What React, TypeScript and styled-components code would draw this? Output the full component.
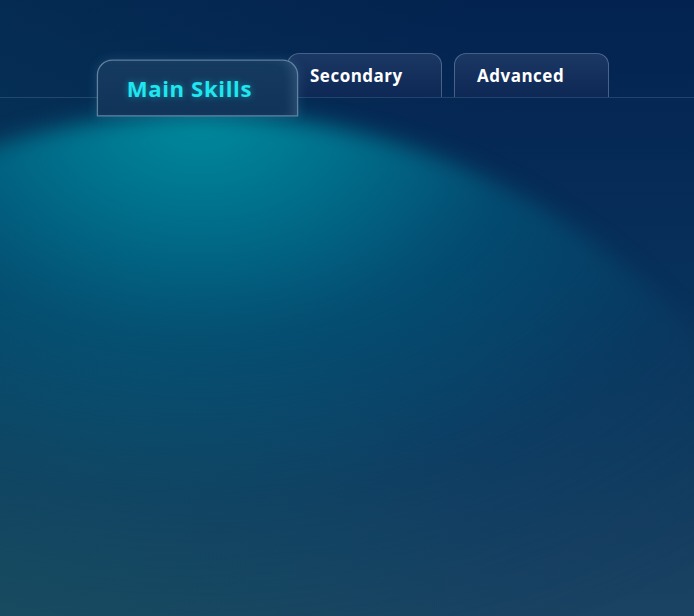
import {useState} from 'react';
import styled, {createGlobalStyle} from 'styled-components';

const GlobalStyle = createGlobalStyle`
  html, body {
    margin: 0;
    padding: 0;
    background: #03214f;
  }
  * {
    box-sizing: border-box;
  }
`;

const tabs = ['Main Skills', 'Secondary', 'Advanced'];

const Page = styled.div`
  position: relative;
  width: 694px;
  height: 616px;
  overflow: hidden;
  font-family: 'Open Sans', 'DejaVu Sans', sans-serif;
  background:
    radial-gradient(ellipse 520px 360px at 0 100%, rgba(28, 84, 94, 0.55), rgba(28, 84, 94, 0) 100%),
    linear-gradient(to right, rgba(10, 70, 90, 0.25), rgba(0, 0, 0, 0) 70%),
    linear-gradient(to bottom, #03224f 0%, #07305a 45%, #1a4262 100%);
`;

// circular spotlight under the active tab
const Glow = styled.div`
  position: absolute;
  left: -467px;
  top: 113px;
  width: 1334px;
  height: 1334px;
  border-radius: 50%;
  background: radial-gradient(
    ellipse 800px 560px at 50% 0,
    rgba(0, 140, 158, 1) 0%,
    rgba(0, 122, 148, 0.88) 18%,
    rgba(2, 94, 128, 0.62) 40%,
    rgba(8, 70, 110, 0.28) 70%,
    rgba(10, 60, 100, 0) 100%
  );
  filter: blur(11px);
  pointer-events: none;
`;

const TabBar = styled.div`
  position: relative;
  display: flex;
  gap: 12px;
  padding: 53px 0 0 120px;
  border-bottom: 1px solid rgba(160, 200, 240, 0.18);
`;

const Tab = styled.button<{$active: boolean}>`
  position: relative;
  z-index: ${p => (p.$active ? 2 : 1)};
  width: 155px;
  height: 44px;
  padding: 0 0 0 22px;
  text-align: left;
  font-family: inherit;
  font-size: 17px;
  font-weight: 700;
  letter-spacing: 0.5px;
  cursor: pointer;
  border-radius: 12px 12px 0 0;
  ${p =>
    p.$active
      ? `
    color: #1fe6ef;
    text-shadow: 0 0 6px rgba(30, 230, 240, 0.45);
    background: linear-gradient(to bottom, #153a60, #113459);
    border: 1.2px solid rgba(190, 225, 245, 0.45);
    box-shadow: inset -8px 0 10px -6px rgba(200, 235, 255, 0.18),
      0 0 8px rgba(120, 200, 230, 0.15);
    transform: translateY(13px) scale(1.3);
  `
      : `
    color: #ffffff;
    background: linear-gradient(to bottom, #1b3764, #0e2855);
    border: 1px solid rgba(190, 210, 240, 0.32);
    border-bottom: none;
  `}
`;

export default function App() {
  const [active, setActive] = useState(0);
  return (
    <>
      <GlobalStyle />
      <Page>
        <Glow />
        <TabBar>
          {tabs.map((t, i) => (
            <Tab key={t} $active={i === active} onClick={() => setActive(i)}>
              {t}
            </Tab>
          ))}
        </TabBar>
      </Page>
    </>
  );
}
